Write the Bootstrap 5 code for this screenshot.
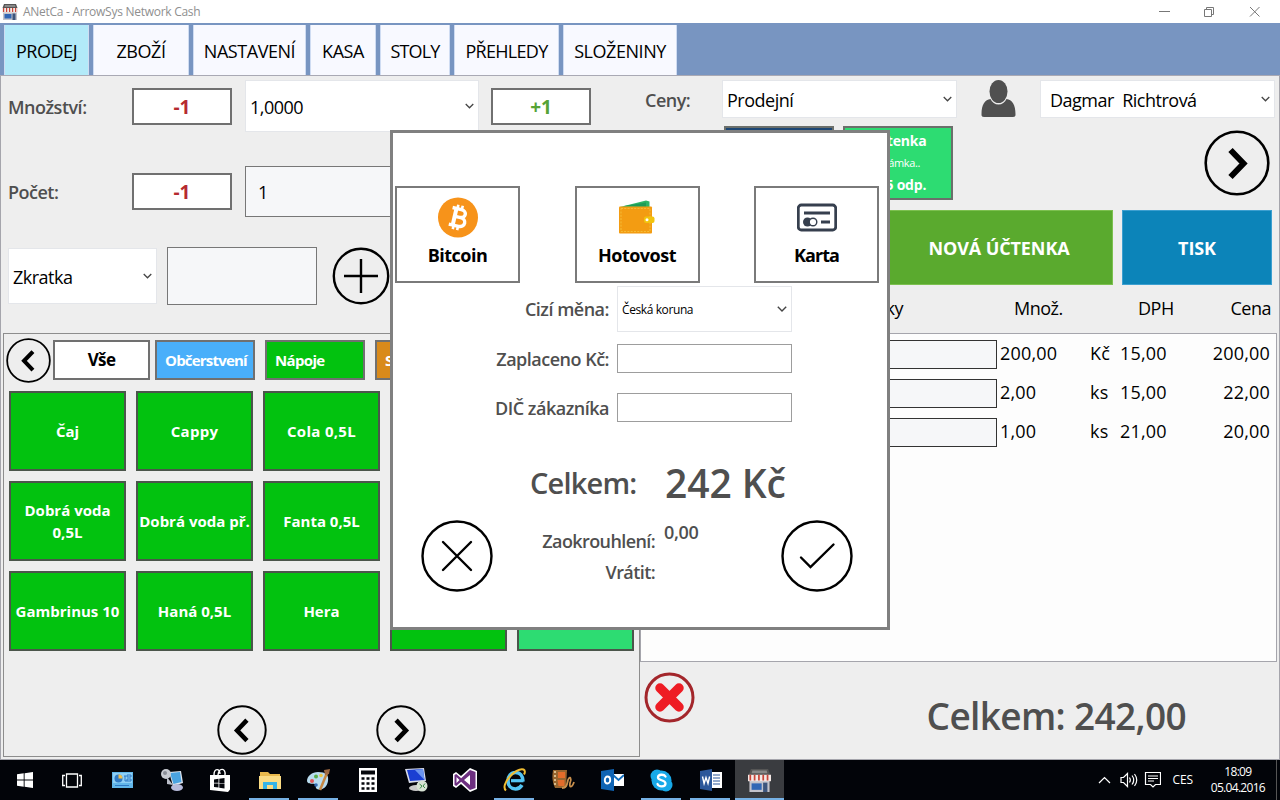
<!DOCTYPE html>
<html lang="cs">
<head>
<meta charset="utf-8">
<meta name="viewport" content="width=device-width, initial-scale=1">
<title>ANetCa - ArrowSys Network Cash</title>
<link href="https://cdn.jsdelivr.net/npm/bootstrap@5.3.0/dist/css/bootstrap.min.css" rel="stylesheet">
<style>
body{width:1280px;height:800px;overflow:hidden;background:#eee;font-family:"Open Sans","Noto Sans",sans-serif;font-size:18px;line-height:1.2;letter-spacing:-.5px;color:#000;white-space:nowrap}
button{letter-spacing:inherit}
svg{display:block;flex:none}
.titlebar{height:23px;background:#fff;color:#8f8f8f;font-size:12px;letter-spacing:-.27px;padding-left:2px}
.titlebar span{padding-top:2px}
.tabs{height:53px;background:#7895c1;padding:2px 0 0 4px;border-bottom:1px solid #a9a9b4}
.tabs a{height:50px;padding-top:4px;background:#f8f9ff;color:#000;text-decoration:none;border-right:1px solid #cfdcf2;border-left:1px solid #cfdcf2;font-size:18px;letter-spacing:-.45px}
.tabs a.active{background:#b2eaf9}
.workspace{height:684px;border-left:1px solid #a5a5ac;border-right:1px solid #a5a5ac;border-bottom:1px solid #a5a5ac}
.left-pane{width:639px}
.right-pane{width:639px}
.lbl{color:#4f4f4f;font-weight:600}
.step{width:100px;height:37px;border:2px solid #707070;background:#fff;font-weight:700;font-size:19px;letter-spacing:0}
.step span{position:relative;top:1px}
.minus{color:#b52a2f}.plus{color:#56a336}
.pick{background:#fff;border:1px solid #e4e6ea;padding:0 4px 0 4px}
.pick span{padding-top:3px}
.field{background:#f6f7f9;border:1px solid #777}
.goods{width:637px;height:424px;margin-left:2px;border:1px solid #8d8d8d}
.cat{width:100px;height:40px;border:2px solid #707070;color:#fff;font-weight:700;font-size:15px;letter-spacing:-.65px;padding:0 8px;overflow:hidden}
.tiles{display:grid;grid-template-columns:repeat(5,117px);grid-auto-rows:80px;gap:10px}
.tile{background:#02c20f;border:2px solid #4b554b;color:#fff;font-weight:700;font-size:15px;letter-spacing:0;line-height:22px;white-space:normal;text-align:center}
.mint{background:#2ddc72}
.bill{width:110px;height:74px;border:2px solid #6b6f6b;color:#fff;font-weight:700;font-size:14px;letter-spacing:-.2px;line-height:22px}
.action{height:75px;padding-top:2px;color:#fff;font-weight:700;font-size:18px;letter-spacing:-.1px}
.list-box{width:637px;height:329px;background:#fdfdfd;border:1px solid #a5a5ac;letter-spacing:.2px}
.line-item{height:39px;font-size:18px}
.line-item .field{width:356px;height:29px;border-color:#333}
.pay-dialog{position:absolute;left:390px;top:130px;width:500px;height:500px;border:3px solid #808080;background:#fff}
.pay{width:125px;height:97px;border:2px solid #7a7a7a;font-weight:700;padding-top:9px}
.pay-field{width:175px;height:29px;border:1px solid #9d9d9d;background:#fff}
.taskbar{height:40px;background:#020409;color:#fff;font-size:12px}
.tb{width:49px;height:40px;display:flex;align-items:center;justify-content:center;position:relative}
.tb.run::after{content:"";position:absolute;left:4px;right:5px;bottom:0;height:2px;background:#76b1e5}
.tb.front{background:#3a3c40}
.tb.front::after{left:0;right:0}
</style>
</head>
<body class="d-flex flex-column">
<svg width="0" height="0" class="position-absolute">
<symbol id="chev" viewBox="0 0 10 6"><path d="M.8.8 5 5 9.2.8" fill="none" stroke="#444" stroke-width="1.4"/></symbol>
<symbol id="next" viewBox="0 0 66 66"><circle cx="33" cy="33" r="31.3" fill="none" stroke="#000" stroke-width="2.6"/><path d="M26.500 20 39.500 33.500 26.500 47" fill="none" stroke="#000" stroke-width="6"/></symbol>
<symbol id="shop" viewBox="0 0 16 16"><path d="M2 0h12l1.500 4H.5z" fill="#555"/><path d="M3 1h10l.5 2h-11z" fill="#888"/><path d="M1 8h14v8H1z" fill="#c3c3cb"/><path d="M0 4h16v4.500H0z" fill="#f3e9e6"/><path d="M1 4h1.200v4H1zM4 4h1.200v4H4zM7 4h1.200v4H7zM10 4h1.200v4H10zM13 4h1.200v4H13z" fill="#c84438"/><path d="M2.500 10h7v4.500h-7z" fill="#3267b5"/><path d="M10.500 9.500h3V16h-3z" fill="#3d557d"/></symbol>
</svg>

<header class="titlebar d-flex align-items-center">
  <svg width="16" height="16"><use href="#shop"/></svg>
  <span style="margin-left:5px">ANetCa - ArrowSys Network Cash</span>
  <svg class="ms-auto me-3" width="112" height="14" viewBox="0 0 112 14" fill="none" stroke="#777"><path d="M7 6.500h11M52.500 4.500h7v7h-7zM54.500 4.500v-2h7v7h-2M98 2l9.500 9.500M107.500 2 98 11.500"/></svg>
</header>

<nav class="tabs d-flex gap-1">
  <a href="#" class="active d-flex align-items-center justify-content-center" style="width:85px">PRODEJ</a>
  <a href="#" class="d-flex align-items-center justify-content-center" style="width:96px">ZBOŽÍ</a>
  <a href="#" class="d-flex align-items-center justify-content-center" style="width:113px">NASTAVENÍ</a>
  <a href="#" class="d-flex align-items-center justify-content-center" style="width:66px">KASA</a>
  <a href="#" class="d-flex align-items-center justify-content-center" style="width:70px;letter-spacing:-.8px">STOLY</a>
  <a href="#" class="d-flex align-items-center justify-content-center" style="width:105px;letter-spacing:-.7px">PŘEHLEDY</a>
  <a href="#" class="d-flex align-items-center justify-content-center" style="width:114px">SLOŽENINY</a>
</nav>

<main class="workspace d-flex">
  <section class="left-pane d-flex flex-column">
    <div class="d-flex align-items-center" style="height:52px;margin-top:4px;padding-left:7px">
      <div class="lbl pt-1" style="width:124px">Množství:</div>
      <button class="step p-0 minus"><span>-1</span></button>
      <div class="pick d-flex align-items-center justify-content-between h-100" style="width:234px;margin-left:13px"><span>1,0000</span><svg width="9" height="6"><use href="#chev"/></svg></div>
      <button class="step p-0 plus" style="margin-left:12px"><span>+1</span></button>
    </div>
    <div class="d-flex align-items-center" style="height:51px;margin-top:34px;padding-left:7px">
      <div class="lbl" style="width:124px;padding-top:3px">Počet:</div>
      <button class="step p-0 minus"><span>-1</span></button>
      <div class="field d-flex align-items-center h-100" style="width:234px;margin-left:13px;padding:2px 0 0 12px">1</div>
    </div>
    <div class="d-flex align-items-center" style="height:58px;margin-top:30px;padding-left:7px">
      <div class="pick d-flex align-items-center justify-content-between" style="width:149px;height:56px"><span>Zkratka</span><svg width="9" height="6"><use href="#chev"/></svg></div>
      <div class="field h-100" style="width:150px;margin-left:10px"></div>
      <svg width="58" height="58" viewBox="0 0 58 58" style="margin-left:15px" fill="none" stroke="#000" stroke-width="2.400"><circle cx="29" cy="29" r="27.200"/><path d="M12 29h34M29 12v34"/></svg>
    </div>
    <div class="goods" style="margin-top:28px">
      <div class="d-flex align-items-center" style="height:46px;margin:3px 0 0 2px">
        <svg width="45" height="45" viewBox="0 0 66 66" style="transform:scaleX(-1)"><use href="#next"/></svg>
        <button class="cat bg-white text-black" style="width:97px;font-size:17px;margin-left:2px">Vše</button>
        <div class="cat d-flex align-items-center" style="background:#49affa;margin-left:5px;letter-spacing:-.8px">Občerstvení</div>
        <div class="cat d-flex align-items-center" style="background:#02c20f;margin-left:10px">Nápoje</div>
        <div class="cat d-flex align-items-center" style="background:#d98a1a;margin-left:10px">Sladkosti</div>
      </div>
      <div class="tiles" style="margin:8px 0 0 5px">
        <button class="tile p-0">Čaj</button><button class="tile p-0" style="letter-spacing:.3px">Cappy</button><button class="tile p-0" style="letter-spacing:.3px">Cola 0,5L</button><button class="tile p-0"></button><button class="tile p-0"></button>
        <button class="tile p-0">Dobrá voda 0,5L</button><button class="tile p-0 text-nowrap">Dobrá voda př.</button><button class="tile p-0">Fanta 0,5L</button><button class="tile p-0"></button><button class="tile p-0"></button>
        <button class="tile p-0 text-nowrap">Gambrinus 10</button><button class="tile p-0">Haná 0,5L</button><button class="tile p-0">Hera</button><button class="tile p-0"></button><button class="tile mint p-0"></button>
      </div>
      <div class="d-flex" style="margin:54px 0 0 213px;gap:109px">
        <svg width="50" height="50" viewBox="0 0 66 66" style="transform:scaleX(-1)"><use href="#next"/></svg>
        <svg width="50" height="50" viewBox="0 0 66 66"><use href="#next"/></svg>
      </div>
    </div>
  </section>

  <section class="right-pane d-flex flex-column">
    <div class="d-flex" style="margin-top:4px;height:38px;padding-left:5px">
      <div class="lbl" style="width:77px;padding-top:10px">Ceny:</div>
      <div class="pick d-flex align-items-center justify-content-between" style="width:235px"><span>Prodejní</span><svg width="9" height="6"><use href="#chev"/></svg></div>
      <svg width="35" height="38" viewBox="0 0 35 38" style="margin-left:24px" fill="#505050"><path d="M9.500 19C4 20 .5 24 .5 34.500c0 1.800.8 2.500 2.500 2.500h29c1.700 0 2.500-.7 2.500-2.500C34.500 24 31 20 25.500 19c-1.500 3.500-4.500 5.500-8 5.500s-6.500-2-8-5.500z"/><ellipse cx="17.500" cy="11.500" rx="9" ry="11.500"/></svg>
      <div class="pick d-flex align-items-center justify-content-between" style="width:235px;margin-left:24px;padding-left:9px;white-space:pre"><span>Dagmar  Richtrová</span><svg width="9" height="6"><use href="#chev"/></svg></div>
    </div>
    <div class="d-flex" style="margin:8px 0 0 84px;height:74px">
      <div class="bill" style="background:#1c4674"></div>
      <div class="bill mint text-center d-flex flex-column justify-content-center" style="margin-left:9px"><span>Účtenka</span><span class="fw-normal" style="font-size:11px;letter-spacing:-.4px">Známka..</span><span>215 odp.</span></div>
      <svg width="66" height="66" style="margin:4px 0 0 251px"><use href="#next"/></svg>
    </div>
    <div class="d-flex" style="margin-top:10px">
      <div class="action d-flex align-items-center justify-content-center" style="width:228px;margin-left:245px;background:#5aaa2e;border:1px solid #7cc04f">NOVÁ ÚČTENKA</div>
      <div class="action d-flex align-items-center justify-content-center" style="width:150px;margin-left:9px;background:#0c84b9;border:1px solid #3c9fd0">TISK</div>
    </div>
    <div class="d-flex align-items-center" style="height:48px;padding-left:198px">
      <div class="text-end" style="width:65px">Položky</div>
      <div style="width:124px;margin-left:111px">Množ.</div>
      <div style="width:60px">DPH</div>
      <div class="text-end" style="width:73px">Cena</div>
    </div>
    <div class="list-box" style="padding-top:6px">
      <div class="line-item d-flex"><div class="field"></div><div style="width:93px;padding:3px 0 0 3px">200,00</div><div style="width:30px;padding-top:3px">Kč</div><div style="width:60px;padding-top:3px">15,00</div><div class="text-end" style="width:90px;padding-top:3px">200,00</div></div>
      <div class="line-item d-flex"><div class="field"></div><div style="width:93px;padding:3px 0 0 3px">2,00</div><div style="width:30px;padding-top:3px">ks</div><div style="width:60px;padding-top:3px">15,00</div><div class="text-end" style="width:90px;padding-top:3px">22,00</div></div>
      <div class="line-item d-flex"><div class="field"></div><div style="width:93px;padding:3px 0 0 3px">1,00</div><div style="width:30px;padding-top:3px">ks</div><div style="width:60px;padding-top:3px">21,00</div><div class="text-end" style="width:90px;padding-top:3px">20,00</div></div>
    </div>
    <div class="d-flex" style="padding:10px 93px 0 4px">
      <svg width="51" height="51" viewBox="0 0 51 51"><circle cx="25.500" cy="25.500" r="23.500" fill="none" stroke="#a3262b" stroke-width="3"/><path d="M16 16 35 35M35 16 16 35" stroke="#ee1c24" stroke-width="9.500" stroke-linecap="round"/></svg>
      <div class="lbl ms-auto" style="font-size:37px;letter-spacing:-.65px;padding-top:22px">Celkem: 242,00</div>
    </div>
  </section>
</main>

<footer class="taskbar d-flex">
  <div class="tb" style="width:49px"><svg width="16" height="16" fill="#fff"><path d="M0 2.300 6.700 1.300V7.500H0zM7.600 1.200 16 0v7.500H7.600zM0 8.400h6.700v6.300L0 13.700zM7.600 8.400H16V16l-8.400-1.200z"/></svg></div>
  <div class="tb"><svg width="20" height="15" fill="none" stroke="#fff" stroke-width="1.300" style="margin-right:4px"><path d="M4.500 1h11v13h-11zM3 2.500H.7v10H3M17 2.500h2.300v10H17"/></svg></div>
  <div class="tb"><svg width="21" height="16"><path fill="#62b7ea" d="M0 0h21v16H0z"/><path fill="#8fd0f5" d="M1 1h19v10H1z"/><circle cx="6.500" cy="6.500" r="4" fill="#2f79c4"/><path d="M6.500 6.500v-4a4 4 0 0 1 4 4z" fill="#f3c04a"/><path d="M12 4h2M15 3h4v2h-4zM15 7h4v2h-4zM13 4v5h2M3 13.500h14" stroke="#2f79c4" fill="none"/></svg></div>
  <div class="tb"><svg width="24" height="24"><path d="M9 4 21 3l2 12-10 3z" fill="#dfe5ef"/><path d="m10 5 10-1 1.500 10-8 2z" fill="#4aa3e0"/><circle cx="6" cy="6" r="5" fill="#c9ccd2"/><circle cx="5" cy="5" r="2" fill="#8b8f98"/><path d="m7 9 6 8-6-1z" fill="#b9bdc8"/><ellipse cx="17" cy="19.500" rx="6" ry="3.500" fill="#b7bbdb"/></svg></div>
  <div class="tb"><svg width="22" height="24" style="margin-right:2px"><path d="M1 7h20v14.500L19 24l-18-2z" fill="#fff"/><path d="M5 7c0-7 6-7 6-1M9 7c1-8 8-7 7 0" fill="none" stroke="#fff" stroke-width="1.400"/><path d="m5 11.500 4.500-.7v4H5zm5.300-.8 5.200-.8v5h-5.200zM5 15.500h4.500v4L5 19zm5.300 0h5.200v5l-5.200-.8z" fill="#05070c"/></svg></div>
  <div class="tb run"><svg width="22" height="19"><path d="M1 1h8l2 2h10v15H1z" fill="#e9b94c"/><path d="M0 5h22v13H0z" fill="#fbdc84"/><path d="M4 18v-7h14v7h-4v-4H8v4z" fill="#35b4e8"/></svg></div>
  <div class="tb run"><svg width="24" height="24"><path d="M11 4c8 0 11 3 10 9-1 7-7 10-11 8-3-2 1-4-2-5-3-1-7 1-8-3C0 8 5 4 11 4z" fill="#b9dcef"/><circle cx="5" cy="13" r="2" fill="#e25555"/><circle cx="9" cy="8.500" r="2" fill="#58ae4b"/><circle cx="14" cy="7.500" r="1.800" fill="#edc644"/><circle cx="9" cy="17" r="1.800" fill="#356bb3"/><path d="m20 5-7 17" stroke="#c68743" stroke-width="2.500"/><path d="m17 2 6-1-1 5-4 1z" fill="#9c6842"/></svg></div>
  <div class="tb"><svg width="18" height="24"><path d="M0 0h18v24H0z" fill="#fff"/><path d="M2 2.500h14v4H2z" fill="#05070c"/><path d="M2.500 10.500h13M2.500 15.500h13M2.500 20.500h13" stroke="#05070c" stroke-width="2.500" stroke-dasharray="3 2"/></svg></div>
  <div class="tb"><svg width="23" height="24"><path d="m0 1 19-1 2 13-17 2z" fill="#d8dcea"/><path d="m2 2 16-1 1.500 11L5 13z" fill="#1b3fd2"/><path d="m10 2 8-1 1.500 11z" fill="#6b95ef"/><ellipse cx="11" cy="20" rx="7" ry="3" fill="#c9c9c9"/><circle cx="17" cy="18" r="5.500" fill="#d8e3d4"/><path d="m14.500 16 2.500 2-2 2.500M20 15.500 18 18l2 2" fill="none" stroke="#3b8b46"/></svg></div>
  <div class="tb"><svg width="25" height="24"><path d="m0 6 3-2 5 4 9-8 7 3v18l-7 3-9-8-5 4-3-2z" fill="#fff"/><path d="m1.500 7 1.700-1 5 4.300L17 2l5.500 2v16L17 22l-8.800-8.300-5 4.300-1.700-1z" fill="#6d2f80"/><path d="M3.500 9v6l3-3zM11 12l6-5v10z" fill="#fff"/></svg></div>
  <div class="tb run"><svg width="24" height="24"><path d="M8 12.700h12.500" stroke="#54c4f2" stroke-width="3.200"/><path d="M19 17c-2 3.200-4 4-6.500 4C8 21 5 17.500 5 12.800S8 4.500 12.500 4.500s7.500 3.500 7.500 9" fill="none" stroke="#54c4f2" stroke-width="3.600"/><path d="M3 22.500C-3.500 17 13-1 20.500 1.500c2 1 1.500 3.500.5 5" fill="none" stroke="#f0bd32" stroke-width="2"/></svg></div>
  <div class="tb"><svg width="24" height="22"><path d="M1 1h14l-1 18H3C0 12 0 8 1 1z" fill="#97652f"/><path d="M6 3h7v6H6zM5.500 11h7v6h-6z" fill="#e26c2b"/><path d="M3 2v16" stroke="#ead3a4" stroke-width="1.600" stroke-dasharray="2 2"/><path d="M10 19c5 0 5-4 6-8 2-5 4-1 2 3-1 5 2 5 4-1" fill="none" stroke="#c9904d" stroke-width="1.800"/></svg></div>
  <div class="tb"><svg width="23" height="22"><path d="M12 5h11v12H12z" fill="#fff"/><path d="m12 6 5.500 5L23 6" fill="none" stroke="#0f6cbd" stroke-width="1.800"/><path d="m0 2 13-2v22L0 20z" fill="#0f64b4"/><ellipse cx="6.500" cy="11" rx="2.700" ry="3.500" fill="none" stroke="#fff" stroke-width="1.900"/></svg></div>
  <div class="tb run"><svg width="23" height="23"><circle cx="7" cy="7" r="6.500" fill="#18a9e8"/><circle cx="16" cy="16" r="6.500" fill="#18a9e8"/><circle cx="11.500" cy="11.500" r="10" fill="#18a9e8"/><path d="M15.500 7.500C14 5 8 5 8 8.500c0 3.500 7.500 2 7.500 6 0 4-7 3.500-8 .5" fill="none" stroke="#fff" stroke-width="2.300" stroke-linecap="round"/></svg></div>
  <div class="tb run"><svg width="22" height="22"><path d="M11 3h11v16H11z" fill="#fff"/><path d="M13 6h7M13 9h7M13 12h7M13 15h7" stroke="#2b579a"/><path d="m0 2 12-2v22L0 20z" fill="#2b579a"/><path d="m2.500 7.500 1.600 7L6 8.500l2 6 1.600-7" fill="none" stroke="#fff" stroke-width="1.400"/></svg></div>
  <div class="tb run front"><svg width="23" height="23"><use href="#shop"/></svg></div>
  <div class="d-flex align-items-center ms-auto">
    <svg width="63" height="18" viewBox="0 0 63 18" fill="none" stroke="#fff" stroke-width="1.200"><path d="m1 12 5.500-5.500L12 12M23 6.500h2.500l4-4v13l-4-4H23zM31.500 6.500c1 1.500 1 3.500 0 5M34 4.500c2.300 3 2.300 6 0 9M36.500 3c3 4 3 8 0 12"/><path transform="translate(6.500)" d="M41 1.500h15v12h-5L48.500 16 46 13.500h-5zM43.500 5h10M43.500 7.500h10M43.500 10h6"/></svg>
    <span style="margin-left:12px;letter-spacing:-.2px">CES</span>
    <div class="text-center" style="margin-left:18px;line-height:16px;letter-spacing:-.7px">18:09<br>05.04.2016</div>
    <div style="width:1px;height:40px;background:#555;margin:0 3px 0 11px"></div>
  </div>
</footer>

<div class="pay-dialog" role="dialog">
  <div class="d-flex" style="padding:53px 0 0 2px;gap:54.5px">
    <button class="pay bg-white d-flex flex-column align-items-center"><svg width="40" height="41" viewBox="0 0 40 41"><circle cx="20" cy="20.500" r="20" fill="#f7931a"/><g transform="rotate(13 20 20.500)" fill="none" stroke="#fff"><path d="M12.500 12h9c6.500 0 6.500 8 0 8h-5.500 6.500c7 0 7 9 0 9h-10" stroke-width="3.400"/><path d="M16.500 12v17" stroke-width="4"/><path d="M17.500 8v4M22 8v4M17.500 29v4M22 29v4" stroke-width="2.600"/></g></svg><span style="margin-top:7px">Bitcoin</span></button>
    <button class="pay bg-white d-flex flex-column align-items-center"><svg width="36" height="41" viewBox="0 0 36 41"><path d="M1 10 27 3.500l3.500 1V12H1z" fill="#2eb566"/><path d="m5 9 22-3.500V10z" fill="#1f9b58"/><rect y="9.500" width="33" height="27" rx="1" fill="#f39c12"/><path d="M2 11.500h29V34.500H2z" fill="none" stroke="#f5c542" stroke-width=".8" stroke-dasharray="2 1.300"/><rect x="25" y="19.500" width="10.500" height="6.500" rx="2" fill="#f1c40f"/><circle cx="28" cy="22.700" r="1.500" fill="#fff"/></svg><span style="margin-top:7px">Hotovost</span></button>
    <button class="pay bg-white d-flex flex-column align-items-center"><svg width="40" height="41" viewBox="0 0 40 41"><rect x="1.300" y="8" width="37.400" height="25" rx="3" fill="none" stroke="#363f4e" stroke-width="2.800"/><path d="M7 16h26M24 25h9" stroke="#363f4e" stroke-width="3"/><circle cx="10.500" cy="25" r="4.500" fill="#363f4e"/><circle cx="16" cy="25" r="3.800" fill="#fff" stroke="#363f4e" stroke-width="1.400"/></svg><span style="margin-top:7px;letter-spacing:-.9px">Karta</span></button>
  </div>
  <div class="d-grid align-items-center" style="grid-template-columns:216px 175px;grid-template-rows:46px 53px 45px;column-gap:8px;margin-top:3px">
    <div class="lbl text-end" style="padding-top:2px">Cizí měna:</div>
    <div class="pick d-flex align-items-center justify-content-between" style="height:46px;font-size:12px;letter-spacing:-.4px"><span>Česká koruna</span><svg width="10" height="6"><use href="#chev"/></svg></div>
    <div class="lbl text-end" style="padding-top:2px">Zaplaceno Kč:</div><div class="pay-field"></div>
    <div class="lbl text-end" style="padding-top:2px">DIČ zákazníka</div><div class="pay-field"></div>
  </div>
  <div class="d-flex lbl" style="height:56px;margin-top:26px;padding-left:137px">
    <div style="width:135px;font-size:29px;letter-spacing:-.8px;padding-top:10px">Celkem:</div>
    <div style="font-size:39px;letter-spacing:-.1px;padding-top:4px">242 Kč</div>
  </div>
  <div class="d-flex lbl">
    <svg width="72" height="72" viewBox="0 0 72 72" style="margin:8px 0 0 28px" fill="none" stroke="#000" stroke-width="2.400" stroke-linecap="round"><circle cx="36" cy="36" r="34.500"/><path d="m22 22 28 28M50 22 22 50"/></svg>
    <div class="text-end" style="width:162px;line-height:31px;letter-spacing:-.6px;padding-top:14px">Zaokrouhlení:<br>Vrátit:</div>
    <div style="width:126px;padding:10px 0 0 9px;letter-spacing:-.3px">0,00</div>
    <svg width="72" height="72" viewBox="0 0 72 72" style="margin-top:8px" fill="none" stroke="#000" stroke-width="2.400" stroke-linecap="round"><circle cx="36" cy="36" r="34.500"/><path d="m20 37.500 9.500 9.500L52.500 24.500"/></svg>
  </div>
</div>
<script src="https://cdn.jsdelivr.net/npm/bootstrap@5.3.0/dist/js/bootstrap.bundle.min.js"></script>
</body>
</html>
